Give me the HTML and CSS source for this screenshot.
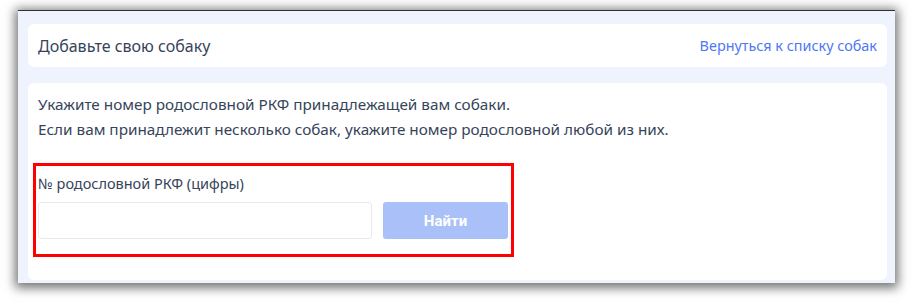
FILE: index.html
```html
<!DOCTYPE html>
<html lang="ru">
<head>
<meta charset="utf-8">
<title>Добавьте свою собаку</title>
<link rel="stylesheet" href="styles.css">
</head>
<body>
<div class="window">
  <div class="head-card">
    <span class="title">Добавьте свою собаку</span>
    <a class="back" href="#">Вернуться к списку собак</a>
  </div>
  <div class="main-card">
    <p class="intro">Укажите номер родословной РКФ принадлежащей вам собаки.<br>Если вам принадлежит несколько собак, укажите номер родословной любой из них.</p>
    <div class="highlight">
      <label class="label" for="num">№ родословной РКФ (цифры)</label>
      <div class="row">
        <input class="input" id="num" type="text">
        <button class="btn" type="button">Найти</button>
      </div>
    </div>
  </div>
</div>
</body>
</html>
```
FILE: styles.css
```css
html, body {
  margin: 0;
  padding: 0;
  background: #ffffff;
}
body {
  font-family: "Noto Sans", "Open Sans", sans-serif;
  color: #36445a;
  width: 914px;
  height: 303px;
  overflow: hidden;
}
.window {
  margin: 10px 19px 0 18px;
  height: 273px;
  box-sizing: border-box;
  background: #eff3fd;
  border-top: 1px solid #2f3236;
  box-shadow: 0 2px 10px 3px rgba(0, 0, 0, 0.55);
  padding: 13px 8px 0 10px;
  display: flex;
  flex-direction: column;
  gap: 16px;
  overflow: hidden;
}
.head-card {
  height: 43px;
  background: #ffffff;
  border-radius: 6px;
  display: flex;
  align-items: center;
  justify-content: space-between;
  padding: 0 10px;
  flex-shrink: 0;
}
.title {
  font-size: 16px;
  color: #36445a;
}
.back {
  font-size: 14.4px;
  color: #4d78f3;
  text-decoration: none;
}
.main-card {
  background: #ffffff;
  border-radius: 6px;
  height: 197px;
  box-sizing: border-box;
  padding: 9px 10px 0 10px;
  flex-shrink: 0;
}
.intro {
  margin: 0;
  font-size: 15.3px;
  line-height: 25px;
}
.highlight {
  margin: 21px 0 0 -5px;
  width: 481px;
  box-sizing: border-box;
  border: 3px solid #ff0000;
  padding: 7px 3px 15px 2px;
}
.label {
  display: block;
  font-size: 14.5px;
  line-height: 20px;
  margin-bottom: 9px;
}
.row {
  display: flex;
  gap: 11px;
}
.input {
  width: 334px;
  height: 37px;
  box-sizing: border-box;
  border: 1px solid #ece9ed;
  border-radius: 3px;
  margin: 0;
  padding: 0 10px;
  background: #ffffff;
}
.btn {
  width: 125px;
  height: 37px;
  border: none;
  border-radius: 3px;
  background: #a9c1f8;
  color: #ffffff;
  font-family: "Roboto", "Liberation Sans", sans-serif;
  font-weight: 700;
  font-size: 15px;
  margin: 0;
  padding: 0;
}
```
